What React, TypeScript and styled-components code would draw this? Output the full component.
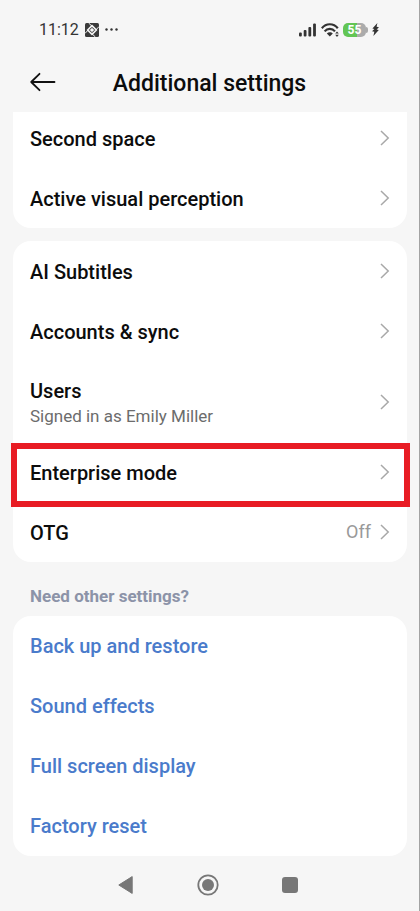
import React from "react";
import styled, { createGlobalStyle } from "styled-components";

const GlobalStyle = createGlobalStyle`
  *, *::before, *::after { box-sizing: border-box; }
  html, body { margin: 0; background: #f6f6f6; }
  body { font-family: Roboto, "Liberation Sans", sans-serif; color: #0c0c0c; }
  button { font: inherit; color: inherit; background: none; border: 0; padding: 0; cursor: pointer; }
  svg { display: block; flex: none; }
`;

const Screen = styled.div`
  display: flex;
  flex-direction: column;
  min-height: 100vh;
  background: #f6f6f6;
  border-right: 1px solid #a3a3a3;
`;

const StatusBar = styled.div`
  display: flex;
  align-items: center;
  justify-content: space-between;
  height: 56px;
  padding: 3px 40px 0 39px;
`;

const StatusGroup = styled.div<{ $gap: number }>`
  display: flex;
  align-items: center;
  gap: ${(p) => p.$gap}px;
`;

const Clock = styled.time`
  font-size: 16px;
  line-height: 20px;
  color: #333;
`;

const Battery = styled.span`
  display: flex;
  align-items: center;
`;

const BatteryBody = styled.span`
  width: 23px;
  height: 14px;
  border-radius: 5px;
  background: linear-gradient(to right, #62c554 60%, #ababab 60%);
  color: #fff;
  font-size: 12px;
  font-weight: 700;
  line-height: 14px;
  text-align: center;
`;

const BatteryTip = styled.span`
  width: 2px;
  height: 6px;
  border-radius: 0 2px 2px 0;
  background: #ababab;
`;

const Header = styled.header`
  display: grid;
  grid-template-columns: 28px 1fr 28px;
  align-items: center;
  height: 56px;
  padding: 0 28px 4px;
`;

const BackButton = styled.button`
  display: flex;
  align-items: center;
  height: 40px;
`;

const Title = styled.h1`
  margin: 0;
  padding-top: 4px;
  font-size: 23px;
  font-weight: 500;
  line-height: 32px;
  text-align: center;
  white-space: nowrap;
`;

const Content = styled.main`
  flex: 1;
  overflow: hidden;
  padding: 0 12px 0 13px;
`;

const Card = styled.section<{ $scrolled?: boolean }>`
  background: #fff;
  border-radius: ${(p) => (p.$scrolled ? "0 0 18px 18px" : "18px")};
  & + & { margin-top: 13px; }
`;

const List = styled.ul<{ $scrolled?: boolean }>`
  list-style: none;
  margin: ${(p) => (p.$scrolled ? "-4px" : "0")} 0 0;
  padding: 0;
`;

const Item = styled.li`
  position: relative;
`;

const Row = styled.button<{ $tall?: boolean }>`
  display: flex;
  align-items: center;
  width: 100%;
  height: ${(p) => (p.$tall ? 81 : 60)}px;
  padding: 0 17px;
  gap: 9px;
  text-align: left;
`;

const Labels = styled.span`
  display: flex;
  flex: 1;
  flex-direction: column;
  padding-top: 2px;
`;

const Label = styled.span`
  font-size: 20px;
  font-weight: 500;
  line-height: 26px;
`;

const Detail = styled.span`
  font-size: 17px;
  line-height: 24px;
  color: #6c6c6c;
`;

const Value = styled.span`
  font-size: 18px;
  line-height: 24px;
  color: #999;
`;

const Highlight = styled.span`
  position: absolute;
  inset: 1px -3px -5px -2px;
  border: 6px solid #e81c24;
  pointer-events: none;
`;

const SectionTitle = styled.h2`
  margin: 0;
  padding: 22px 17px 8px;
  font-size: 17px;
  font-weight: 700;
  line-height: 24px;
  color: #8c93a8;
`;

const LinkRow = styled.a`
  display: flex;
  align-items: center;
  height: 60px;
  padding: 0 17px;
  font-size: 20px;
  font-weight: 500;
  line-height: 26px;
  color: #4a7bcb;
  text-decoration: none;
`;

const NavBar = styled.nav`
  display: flex;
  align-items: center;
  justify-content: center;
  gap: 58px;
  height: 55px;
  padding: 2px 3px 0 0;
`;

const NavButton = styled.button`
  display: flex;
  align-items: center;
  justify-content: center;
  width: 24px;
  height: 24px;
`;

const Chevron = () => (
  <svg width="10" height="16" viewBox="0 0 10 16" fill="none" stroke="#a8a8a8" strokeWidth="1.5" aria-hidden="true">
    <path d="M1 1l7.2 7L1 15" />
  </svg>
);

const AppBadge = () => (
  <svg width="14" height="14" viewBox="0 0 14 14" aria-hidden="true">
    <rect width="14" height="14" rx="1.5" fill="#3a3a3a" />
    <path d="M7 2.6L11.4 7 7 11.4 2.6 7z" fill="none" stroke="#f6f6f6" strokeWidth="1.5" />
    <path d="M3.6 0L7 3.2M14 3.6L10.8 7M10.4 14L7 10.8M0 10.4L3.2 7" stroke="#f6f6f6" strokeWidth="1" />
    <path d="M7 4.2l.9 1.9 1.9.9-1.9.9L7 9.8l-.9-1.9L4.2 7l1.9-.9z" fill="#f6f6f6" />
  </svg>
);

const Dots = () => (
  <svg width="13" height="3" viewBox="0 0 13 3" fill="#333" aria-hidden="true">
    <circle cx="1.5" cy="1.5" r="1.2" />
    <circle cx="6.5" cy="1.5" r="1.2" />
    <circle cx="11.5" cy="1.5" r="1.2" />
  </svg>
);

const Signal = () => (
  <svg width="18" height="14" viewBox="0 0 18 14" fill="#333" aria-label="Mobile signal">
    <rect x="0" y="9.5" width="2.8" height="4" rx="1" />
    <rect x="4.7" y="7" width="2.8" height="6.5" rx="1" />
    <rect x="9.4" y="4" width="2.8" height="9.5" rx="1" />
    <rect x="14.1" y="0.5" width="2.8" height="13" rx="1" />
  </svg>
);

const Wifi = () => (
  <svg width="18" height="14" viewBox="0 0 18 14" fill="none" stroke="#333" aria-label="Wi-Fi">
    <path d="M.8 5.2C5-.1 12.6-.1 16.8 5.2" strokeWidth="2.2" />
    <path d="M3.6 8.4c2.8-3.4 7.6-3.4 10.4 0" strokeWidth="2.2" />
    <path d="M5.8 10.6c1.6-1.7 4.4-1.7 6 0l-3 2.9z" fill="#333" stroke="none" />
    <path d="M14.2 10.6L16 8.4l1.8 2.2zM14.2 11.8h3.6L16 14z" fill="#333" stroke="none" />
  </svg>
);

const Bolt = () => (
  <svg width="7" height="13" viewBox="0 0 7 13" fill="#333" aria-label="Charging">
    <path d="M5.4 0L.4 5.6l2 .5L0 8.2l2.3.5L1.4 13 6.8 7l-2.2-.5L7 4.3l-2.4-.5z" />
  </svg>
);

interface Entry {
  label: string;
  detail?: string;
  value?: string;
  highlighted?: boolean;
}

const recentEntries: Entry[] = [{ label: "Second space" }, { label: "Active visual perception" }];

const systemEntries: Entry[] = [
  { label: "AI Subtitles" },
  { label: "Accounts & sync" },
  { label: "Users", detail: "Signed in as Emily Miller" },
  { label: "Enterprise mode", highlighted: true },
  { label: "OTG", value: "Off" },
];

const links = ["Back up and restore", "Sound effects", "Full screen display", "Factory reset"];

const Entries = ({ entries, scrolled }: { entries: Entry[]; scrolled?: boolean }) => (
  <Card $scrolled={scrolled}>
    <List $scrolled={scrolled}>
      {entries.map((entry) => (
        <Item key={entry.label}>
          <Row type="button" $tall={Boolean(entry.detail)}>
            <Labels>
              <Label>{entry.label}</Label>
              {entry.detail && <Detail>{entry.detail}</Detail>}
            </Labels>
            {entry.value && <Value>{entry.value}</Value>}
            <Chevron />
          </Row>
          {entry.highlighted && <Highlight />}
        </Item>
      ))}
    </List>
  </Card>
);

export default function App() {
  return (
    <>
      <GlobalStyle />
      <Screen>
        <StatusBar>
          <StatusGroup $gap={6}>
            <Clock>11:12</Clock>
            <AppBadge />
            <Dots />
          </StatusGroup>
          <StatusGroup $gap={4}>
            <Signal />
            <Wifi />
            <Battery>
              <BatteryBody>55</BatteryBody>
              <BatteryTip />
            </Battery>
            <Bolt />
          </StatusGroup>
        </StatusBar>
        <Header>
          <BackButton type="button" aria-label="Back">
            <svg width="28" height="20" viewBox="0 0 28 20" fill="none" stroke="#111" strokeWidth="1.8" strokeLinecap="round" strokeLinejoin="round">
              <path d="M26.5 10H3.2M11.5 1.8L3.2 10l8.3 8.2" />
            </svg>
          </BackButton>
          <Title>Additional settings</Title>
        </Header>
        <Content>
          <Entries entries={recentEntries} scrolled />
          <Entries entries={systemEntries} />
          <SectionTitle>Need other settings?</SectionTitle>
          <Card>
            <List>
              {links.map((link) => (
                <Item key={link}>
                  <LinkRow href="#">{link}</LinkRow>
                </Item>
              ))}
            </List>
          </Card>
        </Content>
        <NavBar>
          <NavButton type="button" aria-label="Back">
            <svg width="16" height="20" viewBox="0 0 16 20">
              <path d="M14.2 1.6v16.8L.8 10z" fill="#777" stroke="#777" strokeLinejoin="round" />
            </svg>
          </NavButton>
          <NavButton type="button" aria-label="Home">
            <svg width="22" height="22" viewBox="0 0 22 22">
              <circle cx="11" cy="11" r="9.7" fill="none" stroke="#777" strokeWidth="1.8" />
              <circle cx="11" cy="11" r="6" fill="#777" />
            </svg>
          </NavButton>
          <NavButton type="button" aria-label="Recent apps">
            <svg width="16" height="16" viewBox="0 0 16 16">
              <rect width="16" height="16" rx="3" fill="#777" />
            </svg>
          </NavButton>
        </NavBar>
      </Screen>
    </>
  );
}
